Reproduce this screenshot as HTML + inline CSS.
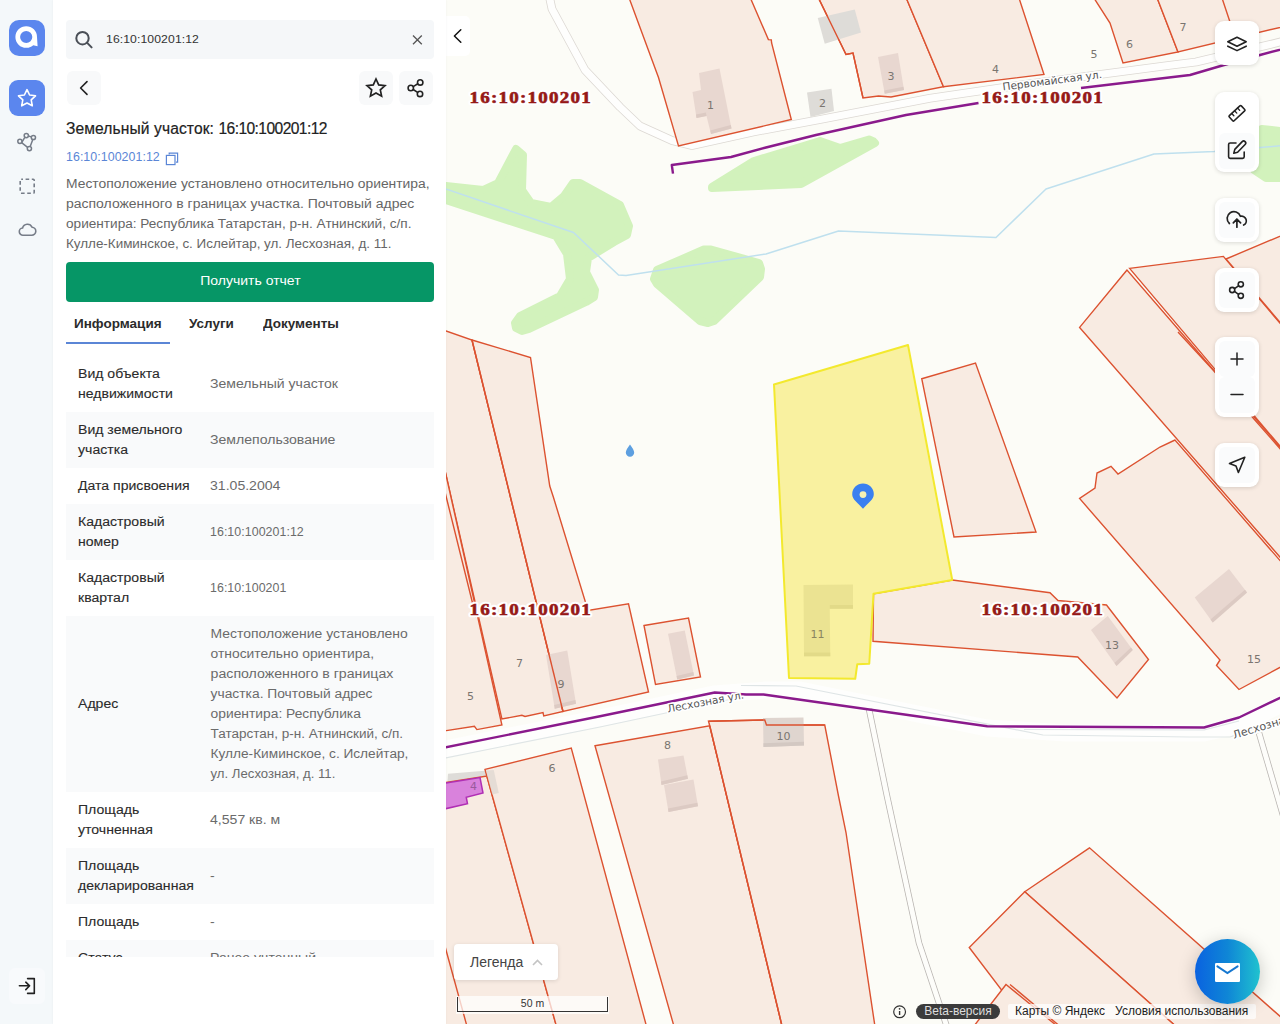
<!DOCTYPE html>
<html lang="ru"><head><meta charset="utf-8"><title>Карта</title>
<style>
*{box-sizing:border-box;margin:0;padding:0}
html,body{width:1280px;height:1024px;overflow:hidden;background:#fcfcf7;font-family:"Liberation Sans",sans-serif;color:#2b2b2b}
#side{position:absolute;left:0;top:0;width:53px;height:1024px;background:#f4f8fa}
#panel{position:absolute;left:53px;top:0;width:393px;height:1024px;background:#fff;box-shadow:0 0 2px rgba(0,0,0,.06)}
#map{position:absolute;left:446px;top:0;width:834px;height:1024px;overflow:hidden;background:#fcfcf7}
.abs{position:absolute}
.logo{left:9px;top:20px;width:36px;height:36px;border-radius:10px;background:#5b86ee}
.sbtn{left:9px;top:80px;width:36px;height:36px;border-radius:9px;background:#5b86ee}
.search{left:13px;top:20px;width:368px;height:39px;border-radius:4px;background:#f5f7f9}
.search span{position:absolute;left:40px;top:12px;font-size:12.2px;color:#333;letter-spacing:.1px;transform:scaleY(.96)}
.ibtn{width:34px;height:34px;border-radius:6px;background:#f8f9fa}
h1{position:absolute;left:13px;top:120px;font-size:15.6px;letter-spacing:.1px;font-weight:normal;color:#222;white-space:nowrap;-webkit-text-stroke:.2px #222}
.cn{left:13px;top:150px;font-size:12.4px;letter-spacing:.05px;color:#5b86d6;white-space:nowrap}
h1 .d{letter-spacing:-.58px}
.row .v.d{font-size:12.4px;letter-spacing:.05px;transform:none;padding-left:12px}
.addr{left:13px;top:174px;width:372px;font-size:12.3px;line-height:20px;color:#666;white-space:nowrap}
.addr span,.v span{display:block;transform-origin:0 50%}
.btn{left:13px;top:262px;width:368px;height:39.7px;border-radius:4px;background:#069666;color:#fff;font-size:12.4px;text-align:center;line-height:38px}
.btn span{display:inline-block;transform:scaleX(1.13)}
.tab{top:317px;font-size:12.1px;font-weight:bold;color:#2b2b2b;white-space:nowrap;transform:scaleX(1.116);transform-origin:0 50%}
.tline{left:13px;top:342px;width:104px;height:2px;background:#5b86d6}
#rows{position:absolute;left:13px;top:356px;width:368px;height:601px;overflow:hidden}
.row{position:relative;width:368px;display:flex;align-items:center;font-size:12.3px;line-height:20px}
.row.g{background:#f9fafb}
.row .k{width:132px;padding:8px 0 8px 10.5px;color:#2b2b2b;-webkit-text-stroke:.1px #2b2b2b;white-space:nowrap;transform:scaleX(1.144);transform-origin:0 50%;position:relative;top:-.5px}
.row .v{flex:1;padding:8px 0 8px 10.5px;color:#6b6b6b;white-space:nowrap;transform:scaleX(1.144);transform-origin:0 50%;position:relative;top:-.5px}

.mb{position:absolute;left:769px;width:44px;background:#fff;border-radius:9px;box-shadow:0 1px 4px rgba(0,0,0,.14)}
.mb i{position:absolute;left:4px;width:36px;height:36px;border-radius:6px;background:#fafbfc}
.mb svg{position:absolute;left:0;top:0}
.ic{fill:none;stroke:#222;stroke-width:1.6;stroke-linecap:round;stroke-linejoin:round}
.leg{left:8px;top:944px;width:104px;height:36px;background:#fff;border-radius:4px;box-shadow:0 1px 4px rgba(0,0,0,.12);font-size:14px;color:#444;line-height:36px;padding-left:16px}
.scale{left:10px;top:996px;width:153px;height:18px;background:rgba(255,255,255,.72)}
.scale b{position:absolute;left:1px;top:1px;width:151px;height:15px;border:1px solid #333;border-top:none;font-weight:normal;font-size:10.5px;line-height:13px;text-align:center;color:#333}
.beta{left:470px;top:1004px;width:84px;height:15px;border-radius:8px;background:#3b3b3b;color:#ddd;font-size:12px;line-height:15px;text-align:center}
.attr{left:562px;top:1004px;width:248px;height:15px;background:rgba(255,255,255,.75);font-size:12px;line-height:15px;color:#222;white-space:nowrap;padding-left:7px;border-radius:2px}
.mail{left:749px;top:939px;width:65px;height:65px;border-radius:50%;background:linear-gradient(90deg,#0a62e0 0%,#0f86d6 50%,#20c2cf 100%);box-shadow:0 4px 18px rgba(0,0,0,.22)}
.coll{left:0;top:16px;width:24px;height:40px;background:#fff;border-radius:0 5px 5px 0}
</style></head><body>
<div id="map">
<svg id="mapsvg" class="abs" style="left:-446px;top:0" width="1280" height="1024" viewBox="0 0 1280 1024">
<defs>
<style>
.p{fill:#f8ebe2;stroke:#dc5230;stroke-width:1.4;stroke-linejoin:miter}
.pl{fill:none;stroke:#dc5230;stroke-width:1.4}
.g{fill:#d2f2bc;stroke:#d2f2bc;stroke-width:8;stroke-linejoin:round}
.w{fill:none;stroke:#bfe0ee;stroke-width:1.5;stroke-linejoin:round}
.b{fill:#e8d7d0}
.bs{fill:#dccac3}
.bg{fill:#dedcd8}
.rd0{fill:none;stroke:#dcd8d3;stroke-width:8.6;stroke-linejoin:round}
.rd1{fill:none;stroke:#fefefd;stroke-width:7;stroke-linejoin:round}
.sr0{fill:none;stroke:#b8b4b0;stroke-width:6.4;stroke-linejoin:round}
.sr1{fill:none;stroke:#fdfdfa;stroke-width:4.9;stroke-linejoin:round}
.pu{fill:none;stroke:#8a1a8c;stroke-width:2.4;stroke-linejoin:round}
.hn{font-family:"DejaVu Sans","Liberation Sans",sans-serif;font-size:11px;fill:#7a7570;text-anchor:middle}
.st{font-family:"DejaVu Sans","Liberation Sans",sans-serif;font-size:11px;fill:#555;paint-order:stroke;stroke:#fff;stroke-width:3;stroke-linejoin:round}
.q{font-family:"Liberation Serif",serif;font-weight:bold;font-size:16.8px;letter-spacing:1.1px;fill:#961818;stroke:#fff;stroke-width:4.6;stroke-linejoin:round}
.q2{font-family:"Liberation Serif",serif;font-weight:bold;font-size:16.8px;letter-spacing:1.1px;fill:#961818;stroke:#961818;stroke-width:.6}
</style>
</defs>
<rect x="440" y="0" width="840" height="1024" fill="#fcfcf7"/>
<!-- green areas -->
<polygon class="g" points="446,186 483,190 498,183 516,149 523,155 522,190 531,203 551,207 564,196 573,183 580,183 620,205 629,226 627,235 614,242 588,258 586,272 595,290 594,297 586,302 529,329 522,331 516,328 515,323 520,316 560,296 570,279 567,254 556,236 440,198 440,186"/>
<polygon class="g" points="712,187 754,161 820,141 840,148 869,139.5 873.5,141.5 875,143 801,184 712,188"/>
<polygon class="g" points="654,279 657,270 704,249.5 711,249.5 759,263 761,269 760,277 714,321 708,323 700,321 657,284"/>
<polygon class="g" points="1262,129 1290,132 1290,178 1266,178 1254,170"/>
<!-- streams -->
<polyline class="w" points="440,187 573.5,232.5 618.5,275 626,275.5 766,254 838.5,231 996,237.5 1046,189 1154,154 1214,151.6 1290,145"/>
<!-- roads -->
<polyline class="rd0" points="549,-5 552,9 585,70 620,107 640,126 672,140.5 692,145.5 753,132 820,119.5 930,98.3 1024,84.5 1170,65.3 1196,62 1270,44.5 1290,39.5"/>
<polyline class="rd1" points="549,-5 552,9 585,70 620,107 640,126 672,140.5 692,145.5 753,132 820,119.5 930,98.3 1024,84.5 1170,65.3 1196,62 1270,44.5 1290,39.5"/>
<!-- Leskhoznaya road -->
<polyline fill="none" stroke="#fefefd" stroke-width="17" stroke-linejoin="round" points="440,750 600,718 714,694 766,690 800,690 987,728 1066,733 1204,733 1239,725 1290,700"/>
<polyline fill="none" stroke="#dfe5e6" stroke-width="1.2" stroke-linejoin="round" points="440,759 600,727 741,697"/>
<polyline fill="none" stroke="#dfe5e6" stroke-width="1.2" stroke-linejoin="round" points="741,685.5 796,686 1043,735 1190,737 1230,737 1290,716"/>
<polyline fill="none" stroke="#dfe5e6" stroke-width="1.2" stroke-linejoin="round" points="1024,729.5 1204,730 1239,721"/>
<!-- side roads -->
<polyline class="sr0" points="869,709 887,796 919,943 946,1024 950,1036"/>
<polyline class="sr1" points="869,709 887,796 919,943 946,1024 950,1036"/>
<polyline class="sr0" points="1259,733 1285,822"/>
<polyline class="sr1" points="1259,733 1285,822"/>
<!-- parcels top -->
<polygon class="p" points="628,-5 658.5,77.5 678.5,146 791.3,119.5 771.6,43 771.3,39.9 768.4,39.6 750.4,-2 748,-8"/>
<polygon class="p" points="817,-5 846,54.5 853,53 863,98 878.5,96 891,97 943.5,86.75 905,-5"/>
<polygon class="p" points="905,-5 943.5,86.75 1044,74.5 1018,-5"/>
<polygon class="p" points="1092,-5 1110,23 1123,63 1178,52 1156,-5"/>
<polygon class="p" points="1156,-5 1178,52 1290,25 1290,-5"/>
<polyline class="pl" points="1221,-5 1232,28"/>
<!-- buildings top -->
<polygon class="b" points="699,73 719.5,68.5 731.5,128.5 711,134 706.5,116 696.5,118 692.5,92 701,90"/>
<polygon class="bs" points="731.5,128.5 711,134 710.2,130.5 730.8,125"/>
<polygon class="bs" points="706.5,116 696.5,118 696,114.5 706,112.5"/>
<polygon class="bg" points="817.75,18 854.75,9.5 861,32.5 824.75,43.75"/>
<polygon class="bg" points="807,92.5 831.5,88.75 834,111 810.5,117"/>
<polygon class="b" points="878,57 898,53 904,90 884.75,93.75"/>
<polygon class="bs" points="904,90 884.75,93.75 884.2,90.5 903.4,86.8"/>
<!-- redraw parcel 3 edge over building -->
<polyline class="pl" points="817,-5 846,54.5 853,53 863,98"/>
<!-- right parcels -->
<polygon class="p" points="1127,270 1079.6,327.4 1300,580 1300,470"/>
<polygon class="p" points="1129.6,268.4 1223.4,256.4 1290,335 1290,458"/>
<polygon class="p" points="1226,259 1290,232 1290,334"/>
<polygon class="p" points="1175,440 1160,447 1118,474 1111,466.4 1097,473 1095,488 1079.6,498.5 1220,660 1216.5,665.5 1239,689.5 1290,662 1290,572"/>
<polyline class="pl" points="1178,332 1214,371 1254,419 1290,460"/>
<polygon class="b" points="1194.75,597.5 1229,569 1247,592.5 1212.75,622.5"/>
<polygon class="bs" points="1247,592.5 1212.75,622.5 1210.5,619.5 1245,589.8"/>
<!-- parcel E -->
<polygon class="p" points="921.75,378.75 975.5,363 1036,532 954,537"/>
<!-- parcel 13 -->
<polygon class="p" points="873.5,593.75 952.25,580 1050,592.75 1058,600.5 1106.5,605 1148.5,659.5 1117,698 1077.75,657 873,641.25"/>
<polygon class="b" points="1091,630 1107.75,616 1132.75,650 1116.5,666"/>
<polygon class="bs" points="1132.75,650 1116.5,666 1114.5,663 1131,647.5"/>
<!-- bottom-right parcels -->
<polygon class="p" points="1089.5,847.8 1024.75,891.75 1180,1030 1300,1034"/>
<polygon class="p" points="1024.75,891.75 969.25,947.5 1032,1030 1180,1030"/>
<polygon class="p" points="1006,984.5 974,1026 1062,1030"/>
<polyline class="pl" points="1010,984.5 1062,1028"/>
<!-- left parcels -->
<polygon class="p" points="430,326 446,331 472,340 563,711.5 543.75,715.9 543,712.5 525,716.5 521.9,715.25 501.9,719 446,475 430,410"/>
<polygon class="p" points="472,340 530.5,357.5 549.75,486 553.5,497.5 588,610.5 628.5,603.75 648.5,692 563,711.5"/>
<polygon class="p" points="430,400 446,475 501.9,725 476.9,729.6 474.4,726.25 446.25,730.6 430,733"/>
<polyline class="pl" points="440,470 446,496 476,617"/>
<polygon class="p" points="644,625.5 688.5,618 700.5,677 655.5,684.5"/>
<polygon class="b" points="668,633.75 684.75,630.5 694,675.5 677.25,679.5"/>
<polygon class="bs" points="694,675.5 677.25,679.5 676.6,676 693.3,672"/>
<polygon class="b" points="546,655 567.25,650.5 576,703.75 554.75,708.75"/>
<polygon class="bs" points="576,703.75 554.75,708.75 554.2,705 575.4,700"/>
<polyline class="pl" points="472,340 563,711.5"/>
<!-- below road -->
<polygon class="bg" points="448,773.75 493.75,770 498.75,793 483.75,796.25 446,800"/>
<polygon class="p" points="430,785 486.8,776 558.6,1034 430,1034"/>

<polygon class="p" points="485,769.4 571.25,748 647.5,1030 557.5,1030"/>
<polygon fill="#ddd6d0" opacity=".7" points="486,770.6 493.75,770 498.75,793 492.2,794.6"/>
<polygon class="p" points="595,745.8 709.75,725.75 783,1030 675,1030"/>
<polygon class="p" points="708.5,721.25 764.75,720 766.5,725 824.75,725 838.5,796 846,832.5 875.5,1030 783,1030 709.75,725.75"/>
<polyline class="pl" points="709.75,725.75 783,1030"/>
<polyline class="pl" points="440,928 446,950 468,1030"/>
<polygon class="b" points="658,759.5 683.5,755.5 688,778.75 661.5,785"/>
<polygon class="bs" points="688,778.75 661.5,785 661,781.5 687.3,775.3"/>
<polygon class="b" points="664,785 693.5,779.5 698,806.25 668.5,812"/>
<polygon class="bs" points="698,806.25 668.5,812 668,808.5 697.4,802.8"/>
<polygon fill="#dfd5cf" points="763,718 803.5,717.5 804,745.5 763.5,747"/>
<polygon fill="#d3c8c2" points="804,745.5 763.5,747 763.4,743.2 804,741.7"/>
<polyline class="pl" points="708.5,721.25 764.75,720 766.5,725 824.75,725"/>
<!-- magenta -->
<polygon points="440,784 480,777.5 483,793 466.25,797.25 467.5,803.75 440,810" fill="#d982dc" stroke="#b02fb4" stroke-width="1.5"/>
<!-- yellow parcel -->
<polygon points="774,384.5 908,345 952.25,580 873.5,593.75 869.25,663.75 857.25,664.25 855.25,678.75 789,678" fill="#f9f1a0" stroke="#f3e92e" stroke-width="2" stroke-linejoin="round"/>
<polygon points="803.5,585 853,584.5 853,608.75 829.75,608.75 830.25,656.25 804,656.25" fill="#ebe392"/>
<polygon points="829.75,605 853,605 853,608.75 829.75,608.75" fill="#e2da88"/>
<polygon points="804,652.5 830.25,652.5 830.25,656.25 804,656.25" fill="#e2da88"/>
<!-- purple boundary -->
<polyline class="pu" points="673,173.6 671.8,165 731,157 766,147.5 816,135 906,115 978.5,103"/>
<polyline class="pu" points="1081,88 1190,75 1224,65 1260,55 1290,47"/>
<polyline class="pu" points="440,748.5 600,716.25 714.75,692.5 746,694.5 763.5,694.5 987.25,726.25 1066,726.75 1204,727.5 1239,717.5 1290,693"/>
<!-- icons on map -->
<path d="M630,444.5 C632.5,448 634.2,450.5 634.2,452.6 A4.2,4.2 0 0 1 625.8,452.6 C625.8,450.5 627.5,448 630,444.5Z" fill="#5d9fe0"/>
<path d="M863,508.8 C858,503 852.2,499.5 852.2,494.2 A10.8,10.8 0 0 1 873.8,494.2 C873.8,499.5 868,503 863,508.8Z" fill="#3a80f0"/>
<circle cx="863" cy="494.6" r="3.4" fill="#f6f2b4"/>
<!-- house numbers -->
<text class="hn" x="710.5" y="109">1</text><text class="hn" x="822.5" y="107">2</text><text class="hn" x="891" y="80">3</text>
<text class="hn" x="995.5" y="72.5">4</text><text class="hn" x="1094" y="58">5</text><text class="hn" x="1129.5" y="48">6</text><text class="hn" x="1183" y="31">7</text>
<text class="hn" x="519.5" y="667">7</text><text class="hn" x="561" y="688">9</text><text class="hn" x="470.5" y="700">5</text>
<text class="hn" x="552" y="772">6</text><text class="hn" x="667.5" y="749">8</text><text class="hn" x="473.5" y="790" style="fill:#9a5a9c">4</text>
<text class="hn" x="783.5" y="740">10</text><text class="hn" x="817.5" y="638" style="fill:#8a8560">11</text>
<text class="hn" x="1112" y="649">13</text><text class="hn" x="1254" y="663">15</text>
<!-- street names -->
<text class="st" style="font-size:10.6px" transform="translate(1003,90.5) rotate(-7.2)">Первомайская ул.</text>
<text class="st" style="font-size:10.5px" transform="translate(668,712.5) rotate(-10.5)">Лесхозная ул.</text>
<text class="st" transform="translate(1234,739) rotate(-17)">Лесхозная ул.</text>
<!-- quarter labels -->
<text class="q" transform="translate(469.5,102.5) scale(1.13,1)">16:10:100201</text><text class="q2" transform="translate(469.5,102.5) scale(1.13,1)">16:10:100201</text>
<text class="q" transform="translate(981.5,102.5) scale(1.13,1)">16:10:100201</text><text class="q2" transform="translate(981.5,102.5) scale(1.13,1)">16:10:100201</text>
<text class="q" transform="translate(469.5,614.5) scale(1.13,1)">16:10:100201</text><text class="q2" transform="translate(469.5,614.5) scale(1.13,1)">16:10:100201</text>
<text class="q" transform="translate(981.5,614.5) scale(1.13,1)">16:10:100201</text><text class="q2" transform="translate(981.5,614.5) scale(1.13,1)">16:10:100201</text>
</svg>

<div class="abs coll"><svg width="24" height="40"><path class="ic" style="stroke-width:1.5;stroke:#111" d="M14.8,13.7 L8.4,20 L14.8,26.3"/></svg></div>
<div class="mb" style="top:20.5px;height:44.3px"><svg width="44" height="44"><path class="ic" d="M22,16.2 L31.2,20.7 L22,25.2 L12.8,20.7 Z M12.8,25.2 L22,29.6 L31.2,25.2"/></svg></div>
<div class="mb" style="top:91.5px;height:80.5px"><i style="top:41px"></i><svg width="44" height="81">
<g transform="translate(22,21.3) rotate(-43)"><rect class="ic" x="-8.2" y="-3.5" width="16.4" height="7" rx="1"/><path class="ic" style="stroke-width:1.3" d="M-4,-3.5v3.2M0,-3.5v3.2M4,-3.5v3.2"/></g>
<path class="ic" d="M21,51 H15.2 a1.6,1.6 0 0 0 -1.6,1.6 V64.8 a1.6,1.6 0 0 0 1.6,1.6 H27.6 a1.6,1.6 0 0 0 1.6,-1.6 V60"/>
<path class="ic" d="M27.2,49.6 a1.9,1.9 0 0 1 2.9,2.9 L22.6,60.2 L18.8,61.2 L19.8,57.4 Z"/>
</svg></div>
<div class="mb" style="top:197.5px;height:44px"><i style="top:4px"></i><svg width="44" height="44">
<path class="ic" style="stroke-width:1.7" d="M14.4,25.5 A6.8,6.8 0 1 1 25.4,18.3 A4.65,4.65 0 0 1 28.6,27"/>
<path class="ic" style="stroke-width:1.7" d="M21.9,29.2 V21.2 M18.3,24.9 L21.9,21.2 L25.6,24.9"/>
</svg></div>
<div class="mb" style="top:267.5px;height:44px"><i style="top:4px"></i><svg width="44" height="44">
<circle class="ic" cx="25.8" cy="16.3" r="2.6"/><circle class="ic" cx="17.2" cy="22" r="2.6"/><circle class="ic" cx="25.8" cy="27.8" r="2.6"/>
<path class="ic" d="M19.5,20.6 L23.5,17.8 M19.5,23.4 L23.5,26.3"/>
</svg></div>
<div class="mb" style="top:337.3px;height:80px"><i style="top:4px"></i><i style="top:40px"></i><svg width="44" height="80">
<path class="ic" style="stroke-width:1.5" d="M16,22 H28 M22,16 V28 M16,57.6 H28"/>
</svg></div>
<div class="mb" style="top:443.3px;height:44px"><i style="top:4px"></i><svg width="44" height="44">
<path class="ic" d="M29.8,14.2 L14.5,20.6 L21,23 L23.4,29.5 Z"/>
</svg></div>
<div class="abs leg">Легенда<svg width="14" height="10" style="position:absolute;left:77px;top:14px"><path d="M2,7 L6.5,2.5 L11,7" fill="none" stroke="#c4c4c4" stroke-width="1.6"/></svg></div>
<div class="abs scale"><b>50 m</b></div>
<svg class="abs" style="left:446px;top:1004px" width="16" height="16"><circle cx="7.6" cy="7.8" r="5.9" fill="none" stroke="#333" stroke-width="1.2"/><path d="M7.6,7v4" stroke="#333" stroke-width="1.4" fill="none"/><circle cx="7.6" cy="4.8" r=".9" fill="#333"/></svg>
<div class="abs beta">Beta-версия</div>
<div class="abs attr">Карты © Яндекс &nbsp;&nbsp;Условия использования</div>
<div class="abs mail"><svg width="65" height="65"><rect x="20" y="24" width="25" height="19" rx="1.2" fill="#fff"/><path d="M22.4,27.4 L32.4,34 L42.6,27.4" fill="none" stroke="#1577d0" stroke-width="2" stroke-linecap="round"/></svg></div>
</div>
<div id="side">
 <div class="abs logo"><svg width="36" height="36"><path d="M17.2,6.2 A10.8,10.8 0 1 0 17.2,27.8 C20.5,27.8 22.8,26.6 24.2,25.2 L28.6,26.2 L28,17 A10.8,10.8 0 0 0 17.2,6.2 Z M17.2,10.9 A6.1,6.1 0 1 1 17.2,23.1 A6.1,6.1 0 1 1 17.2,10.9 Z" fill="#fff" fill-rule="evenodd"/></svg></div>
 <div class="abs sbtn"><svg width="36" height="36"><path d="M18,9.6 L20.6,15 L26.5,15.8 L22.2,19.9 L23.3,25.8 L18,23 L12.7,25.8 L13.8,19.9 L9.5,15.8 L15.4,15 Z" fill="none" stroke="#fff" stroke-width="1.6" stroke-linejoin="round"/></svg></div>
 <svg class="abs" style="left:9px;top:124px" width="36" height="124">
  <g fill="none" stroke="#767d88" stroke-width="1.5"><path d="M12.7,18.6 L15.8,13.4 M19.5,12 L22.2,12.9 M23.8,15.6 L21.2,22.6 M18.6,23.3 L12.6,18.7"/><circle cx="10.9" cy="17.3" r="2.1"/><circle cx="17.3" cy="11.6" r="2.1"/><circle cx="24.4" cy="13.5" r="2.1"/><circle cx="20.4" cy="24.6" r="2.1"/>
  <rect x="11.2" y="55.2" width="14" height="14" rx="1" stroke-width="1.6" stroke-dasharray="3.6 2.6" stroke-dashoffset="1.8"/>
  <path stroke-width="1.6" stroke-linejoin="round" d="M14.2,111.2 A3.6,3.6 0 0 1 13.6,104 A5,5 0 0 1 23,103.2 A4,4 0 0 1 22.6,111.2 Z"/></g>
 </svg>
 <div class="abs" style="left:9px;top:968px;width:36px;height:36px;border-radius:6px;background:#f8fafc"><svg width="36" height="36"><path class="ic" d="M10.4,17.8 H20.4 M16.8,14.2 L20.6,17.8 L16.8,21.6 M18.6,10.6 H25.3 V25.4 H18.6"/></svg></div>
</div>
<div id="panel">
 <div class="abs search"><svg width="368" height="39" style="position:absolute;left:0;top:0"><circle cx="16.5" cy="18.2" r="6.2" fill="none" stroke="#4a4f57" stroke-width="2"/><path d="M21.2,22.9 L25.6,27.4" stroke="#4a4f57" stroke-width="2" stroke-linecap="round"/><path d="M347,15.5 L355.8,24.3 M355.8,15.5 L347,24.3" stroke="#555" stroke-width="1.3"/></svg><span>16:10:100201:12</span></div>
 <div class="abs ibtn" style="left:14px;top:71px"><svg width="34" height="34"><path class="ic" style="stroke-width:1.6" d="M20,10.6 L13.6,17 L20,23.4"/></svg></div>
 <div class="abs ibtn" style="left:306px;top:71px"><svg width="34" height="34"><path class="ic" style="stroke-width:1.7;stroke-linejoin:miter" d="M17,8 L19.7,13.9 L26,14.6 L21.3,18.9 L22.6,25.2 L17,22 L11.4,25.2 L12.7,18.9 L8,14.6 L14.3,13.9 Z"/></svg></div>
 <div class="abs ibtn" style="left:346px;top:71px"><svg width="34" height="34"><circle class="ic" cx="21.2" cy="11.4" r="2.7"/><circle class="ic" cx="11.8" cy="17" r="2.7"/><circle class="ic" cx="21" cy="22.9" r="2.7"/><path class="ic" d="M14.2,15.6 L18.8,12.8 M14.2,18.5 L18.6,21.4"/></svg></div>
 <h1>Земельный участок: <span class="d">16:10:100201:12</span></h1>
 <div class="abs cn">16:10:100201:12<svg width="16" height="16" style="position:absolute;left:98px;top:1px"><path d="M5.2,3.4 V2.2 H13.6 V11.2 H12" fill="none" stroke="#5b86d6" stroke-width="1.2"/><rect x="2.4" y="4.4" width="8.6" height="9.2" fill="none" stroke="#5b86d6" stroke-width="1.2"/></svg></div>
 <div class="abs addr"><span style="transform:scaleX(1.1274)">Местоположение установлено относительно ориентира,</span><span style="transform:scaleX(1.1365)">расположенного в границах участка. Почтовый адрес</span><span style="transform:scaleX(1.106)">ориентира: Республика Татарстан, р-н. Атнинский, с/п.</span><span style="transform:scaleX(1.0914)">Кулле-Киминское, с. Ислейтар, ул. Лесхозная, д. 11.</span></div>
 <div class="abs btn"><span>Получить отчет</span></div>
 <div class="abs tab" style="left:21px">Информация</div>
 <div class="abs tab" style="left:136px">Услуги</div>
 <div class="abs tab" style="left:210px">Документы</div>
 <div class="abs tline"></div>
 <div id="rows">
  <div class="row"><div class="k">Вид объекта<br>недвижимости</div><div class="v">Земельный участок</div></div>
  <div class="row g"><div class="k">Вид земельного<br>участка</div><div class="v">Землепользование</div></div>
  <div class="row"><div class="k">Дата присвоения</div><div class="v">31.05.2004</div></div>
  <div class="row g"><div class="k">Кадастровый<br>номер</div><div class="v d">16:10:100201:12</div></div>
  <div class="row"><div class="k">Кадастровый<br>квартал</div><div class="v d">16:10:100201</div></div>
  <div class="row g"><div class="k">Адрес</div><div class="v"><span style="transform:scaleX(.991)">Местоположение установлено</span><span style="transform:scaleX(.984)">относительно ориентира,</span><span style="transform:scaleX(1.006)">расположенного в границах</span><span style="transform:scaleX(.982)">участка. Почтовый адрес</span><span style="transform:scaleX(.982)">ориентира: Республика</span><span style="transform:scaleX(.961)">Татарстан, р-н. Атнинский, с/п.</span><span style="transform:scaleX(.971)">Кулле-Киминское, с. Ислейтар,</span><span style="transform:scaleX(.935)">ул. Лесхозная, д. 11.</span></div></div>
  <div class="row"><div class="k">Площадь<br>уточненная</div><div class="v">4,557 кв. м</div></div>
  <div class="row g"><div class="k">Площадь<br>декларированная</div><div class="v">-</div></div>
  <div class="row"><div class="k">Площадь</div><div class="v">-</div></div>
  <div class="row g"><div class="k">Статус</div><div class="v">Ранее учтенный</div></div>
 </div>
</div>
</body></html>
